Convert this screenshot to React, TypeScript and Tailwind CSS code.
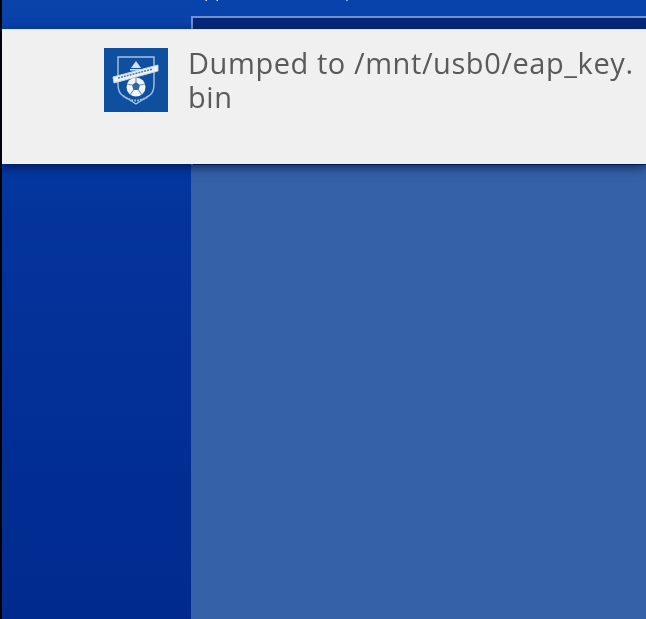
export default function App() {
  return (
    <div className="relative flex h-[619px] w-[646px] overflow-hidden bg-black pl-[2px] font-['Open_Sans',sans-serif]">
      {/* sidebar */}
      <div className="h-full w-[189px] shrink-0 bg-gradient-to-b from-[#0a44ab] from-0% via-[#03349c] via-35% to-[#012a8e] to-100%" />
      {/* main column */}
      <div className="flex h-full flex-1 flex-col bg-[#3461a8]">
        <div className="flex h-[165px] shrink-0 flex-col justify-end bg-[#0843ab] pt-[16px]">
          <div className="h-full border-l-2 border-t-2 border-[#7391cb] bg-[#04297c] blur-[0.3px]" />
        </div>
      </div>
      {/* clipped descenders of the line above the banner */}
      <div className="absolute left-[204px] top-[-20px] flex text-[18px] leading-[20px] text-white/80 blur-[0.4px]">
        <span className="w-[138px]">pp</span>
        <span className="w-[190px]">|</span>
        <span>,</span>
      </div>
      {/* notification banner */}
      <div className="absolute left-[2px] right-0 top-[29px] flex h-[135px] gap-[20px] border-t border-[#dfe4ee] bg-[#f0f0f0] pl-[102px] pt-[18px] shadow-[0_3px_10px_rgba(0,10,50,0.7)]">
        <svg viewBox="0 0 64 64" className="h-[64px] w-[64px] shrink-0 blur-[0.5px]">
          <rect width="64" height="64" fill="#0e4f9f" />
          <path d="M14 9H50V36Q50 44 46 47L32 56L18 47Q14 44 14 36Z" fill="#0e4f9f" stroke="#a9c3df" strokeWidth="1.4" />
          <path d="M32 13l5 7h-10z" fill="#d5e2f0" />
          <path d="M26 21h12v1.5H26z" fill="#d5e2f0" />
          <path d="M9 29L54 17V23L10 35Z" fill="#eef3f8" stroke="#c2d4e7" strokeWidth="1" />
          <path d="M14 30L49 21" stroke="#4a77ae" strokeWidth="1.6" strokeDasharray="2 1" />
          <circle cx="32" cy="39" r="9.5" fill="#f2f5f9" />
          <path d="M32 34l4 3-1.5 5h-5L28 37z" fill="#34689f" />
          <path d="M32 29.5V34M41 36l-5 1M38 47l-3.5-5M26 47l3.5-5M23 36l5 1" stroke="#6d94bf" strokeWidth="1.2" />
          <path d="M19 48Q32 57 45 48" fill="none" stroke="#9ab8d8" strokeWidth="2" strokeDasharray="2 1" />
        </svg>
        <div className="-mt-[2px] w-[458px] text-[29px] leading-[34px] tracking-[0.57px] text-[#5a5a5a] blur-[0.5px]">
          Dumped to /mnt/usb0/eap_key.
          <br />
          bin
        </div>
      </div>
    </div>
  );
}
